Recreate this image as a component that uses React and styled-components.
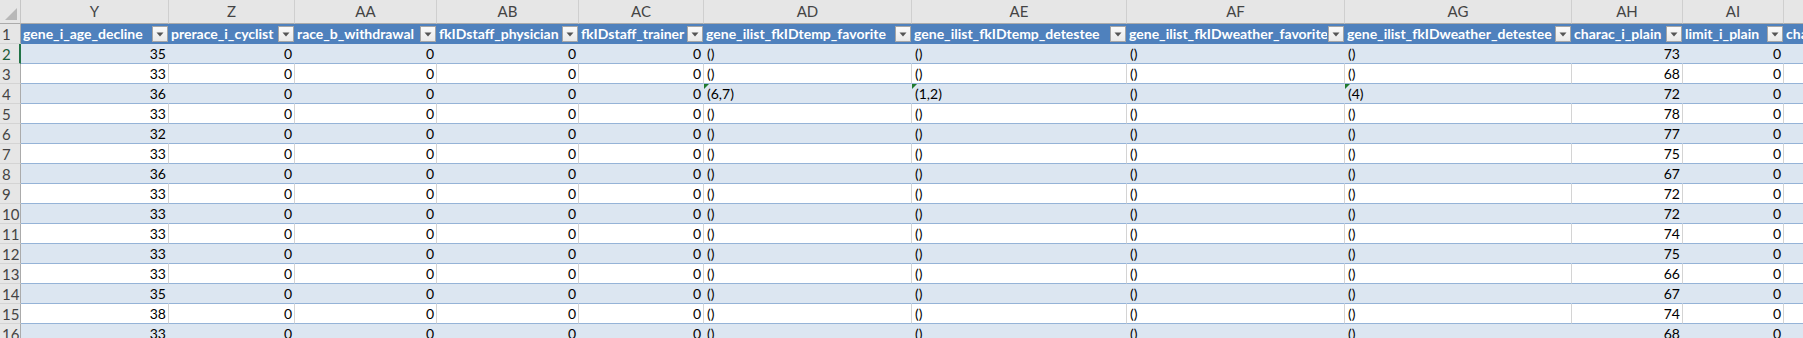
import styled, { createGlobalStyle } from 'styled-components';

const GlobalStyle = createGlobalStyle`
  html, body {
    margin: 0;
    padding: 0;
    background: #ffffff;
    overflow: hidden;
  }
  body {
    font-family: Lato, "Liberation Sans", sans-serif;
  }
`;

const COLUMNS = [
  { letter: 'Y', title: 'gene_i_age_decline', width: 148, align: 'right' },
  { letter: 'Z', title: 'prerace_i_cyclist', width: 126, align: 'right' },
  { letter: 'AA', title: 'race_b_withdrawal', width: 142, align: 'right' },
  { letter: 'AB', title: 'fkIDstaff_physician', width: 142, align: 'right' },
  { letter: 'AC', title: 'fkIDstaff_trainer', width: 125, align: 'right' },
  { letter: 'AD', title: 'gene_ilist_fkIDtemp_favorite', width: 208, align: 'left' },
  { letter: 'AE', title: 'gene_ilist_fkIDtemp_detestee', width: 215, align: 'left' },
  { letter: 'AF', title: 'gene_ilist_fkIDweather_favorite', width: 218, align: 'left' },
  { letter: 'AG', title: 'gene_ilist_fkIDweather_detestee', width: 227, align: 'left' },
  { letter: 'AH', title: 'charac_i_plain', width: 111, align: 'right' },
  { letter: 'AI', title: 'limit_i_plain', width: 101, align: 'right' },
  { letter: 'AJ', title: 'charac_i_extra', width: 200, align: 'right' },
];

const TEMPLATE = `21px ${COLUMNS.map((c) => `${c.width}px`).join(' ')}`;

const AGES = [35, 33, 36, 33, 32, 33, 36, 33, 33, 33, 33, 33, 35, 38, 33];
const PLAIN = [73, 68, 72, 78, 77, 75, 67, 72, 72, 74, 75, 66, 67, 74, 68];

const ROWS = AGES.map((age, i) => {
  const n = i + 2;
  const special = n === 4;
  return {
    n,
    cells: [
      { v: age },
      { v: 0 },
      { v: 0 },
      { v: 0 },
      { v: 0 },
      { v: special ? '(6,7)' : '()', mark: special },
      { v: special ? '(1,2)' : '()', mark: special },
      { v: '()' },
      { v: special ? '(4)' : '()', mark: special },
      { v: PLAIN[i] },
      { v: 0 },
      { v: '' },
    ],
  };
});

const Sheet = styled.div`
  width: 1803px;
  height: 338px;
  overflow: hidden;
  display: flex;
  flex-direction: column;
`;

const Row = styled.div`
  display: grid;
  grid-template-columns: ${TEMPLATE};
  height: ${(p) => (p.$letters ? 24 : 20)}px;
  flex: none;
`;

const Corner = styled.div`
  background: #e6e6e6;
  border-right: 1px solid #c6c6c6;
  border-bottom: 1px solid #ababab;
  display: flex;
  align-items: flex-end;
  justify-content: flex-end;
  padding: 0 3px 3px 0;
  box-sizing: border-box;
`;

const ColLetter = styled.div`
  background: #e6e6e6;
  border-right: 1px solid #cfcfcf;
  border-bottom: 1px solid #ababab;
  box-sizing: border-box;
  color: #444444;
  font-size: 15px;
  line-height: 23px;
  text-align: center;
  overflow: hidden;
`;

const RowHead = styled.div`
  background: #e6e6e6;
  border-right: ${(p) => (p.$active ? '2px solid #217346' : '1px solid #ababab')};
  border-bottom: 1px solid #d4d4d4;
  box-sizing: border-box;
  color: ${(p) => (p.$active ? '#1d5c3a' : '#444444')};
  font-size: 15px;
  line-height: 20px;
  padding-left: 2px;
  overflow: hidden;
  white-space: nowrap;
`;

const HeaderCell = styled.div`
  background: #4f81bd;
  color: #ffffff;
  font-weight: 700;
  font-size: 14px;
  line-height: 20px;
  box-sizing: border-box;
  padding: 0 1px 0 2px;
  display: flex;
  align-items: center;
  gap: 1px;
  overflow: hidden;
  white-space: nowrap;
`;

const HeaderText = styled.span`
  flex: 1;
  overflow: hidden;
  white-space: nowrap;
`;

const FilterButton = styled.span`
  flex: none;
  width: 16px;
  height: 16px;
  box-sizing: border-box;
  border: 1px solid #a6a6a6;
  background: linear-gradient(#fbfbfb, #e9e9e9);
  display: flex;
  align-items: center;
  justify-content: center;
`;

const Cell = styled.div`
  position: relative;
  background: ${(p) => (p.$band ? '#dce6f1' : '#ffffff')};
  border-right: 1px solid ${(p) => (p.$band ? '#dce6f1' : '#d4d4d4')};
  border-bottom: 1px solid #95b3d7;
  box-sizing: border-box;
  color: #000000;
  font-size: 14px;
  line-height: 19px;
  text-align: ${(p) => p.$align};
  padding: 0 2px 0 3px;
  white-space: nowrap;
  overflow: hidden;
`;

const ErrorMark = styled.span`
  position: absolute;
  left: 0;
  top: 0;
  width: 0;
  height: 0;
  border-top: 5px solid #1f7a2e;
  border-right: 5px solid transparent;
`;

function CornerMark() {
  return (
    <svg width="12" height="12" viewBox="0 0 12 12">
      <polygon points="12,0 12,12 0,12" fill="#b8b8b8" />
    </svg>
  );
}

function Arrow() {
  return (
    <svg width="8" height="5" viewBox="0 0 8 5">
      <polygon points="0.5,0.5 7.5,0.5 4,4.5" fill="#555555" />
    </svg>
  );
}

export default function App() {
  return (
    <>
      <GlobalStyle />
      <Sheet>
        <Row $letters>
          <Corner>
            <CornerMark />
          </Corner>
          {COLUMNS.map((c) => (
            <ColLetter key={c.letter}>{c.letter}</ColLetter>
          ))}
        </Row>

        <Row>
          <RowHead>1</RowHead>
          {COLUMNS.map((c) => (
            <HeaderCell key={c.letter}>
              <HeaderText>{c.title}</HeaderText>
              <FilterButton>
                <Arrow />
              </FilterButton>
            </HeaderCell>
          ))}
        </Row>

        {ROWS.map((r) => (
          <Row key={r.n}>
            <RowHead $active={r.n === 2}>{r.n}</RowHead>
            {r.cells.map((cell, i) => (
              <Cell key={i} $band={r.n % 2 === 0} $align={COLUMNS[i].align}>
                {cell.mark && <ErrorMark />}
                {cell.v}
              </Cell>
            ))}
          </Row>
        ))}
      </Sheet>
    </>
  );
}
